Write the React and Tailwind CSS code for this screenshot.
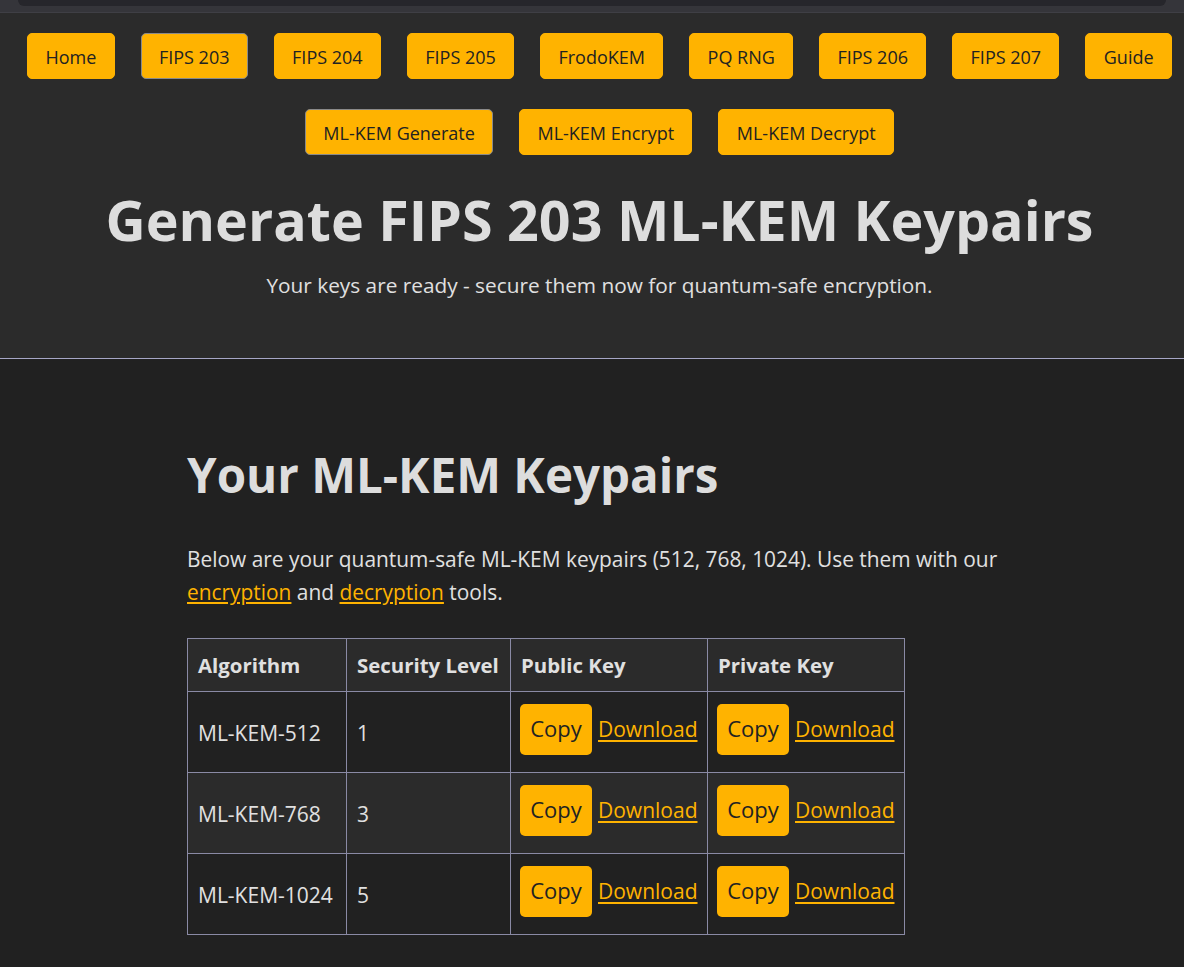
import React from 'react';

const NAV = ['Home', 'FIPS 203', 'FIPS 204', 'FIPS 205', 'FrodoKEM', 'PQ RNG', 'FIPS 206', 'FIPS 207', 'Guide'];
const SUB = ['ML-KEM Generate', 'ML-KEM Encrypt', 'ML-KEM Decrypt'];
const ACTIVE = ['FIPS 203', 'ML-KEM Generate'];

const ROWS = [
  { name: 'ML-KEM-512', level: 1 },
  { name: 'ML-KEM-768', level: 3 },
  { name: 'ML-KEM-1024', level: 5 },
];

const font = { fontFamily: '"Open Sans", "Noto Sans", sans-serif' };

const NavButton = ({ label }) => {
  const active = ACTIVE.includes(label);
  return (
    <button
      className={`h-[46px] pt-[2px] px-[17.3px] rounded-[5px] bg-[#ffb300] text-[#222] text-[18px] whitespace-nowrap border ${
        active ? 'border-[#8a8a8a]' : 'border-[#ffb300]'
      }`}
    >
      {label}
    </button>
  );
};

const KeyCell = () => (
  <td className="border border-[#8a8aa5] px-[9px] align-middle">
    <div className="flex items-center gap-[6px]">
      <button className="w-[72px] h-[51px] -mt-[6px] pb-[2px] rounded-[5px] bg-[#ffb300] text-[#222] text-[22px]">Copy</button>
      <a href="#" className="-mt-[4px] text-[#ffb300] underline text-[21px] underline-offset-[3px]">Download</a>
    </div>
  </td>
);

export default function App() {
  return (
    <div className="min-h-screen bg-[#212121] text-[#e0e0e0]" style={font}>
      {/* top strip */}
      <div className="h-[13px] bg-[#35353a] border-b border-[#3f3f45]">
        <div className="mx-[18px] h-[6px] bg-[#26262b] rounded-b-[8px]" />
      </div>

      {/* header */}
      <header className="bg-[#2b2b2b] border-b border-[#a6a6c6] pl-[15px] pt-[20px] pb-[57px]">
        <nav className="flex flex-col gap-y-[30px]">
          <div className="flex justify-center gap-x-[26px]">
            {NAV.map((l) => <NavButton key={l} label={l} />)}
          </div>
          <div className="flex justify-center gap-x-[26px]">
            {SUB.map((l) => <NavButton key={l} label={l} />)}
          </div>
        </nav>
        <h1 className="mt-[25px] text-center font-bold text-[55.6px] leading-[80px] text-[#dddddd]">
          Generate FIPS 203 ML-KEM Keypairs
        </h1>
        <p className="mt-[10px] text-center text-[20.8px] text-[#e0e0e0]">
          Your keys are ready - secure them now for quantum-safe encryption.
        </p>
      </header>

      {/* main */}
      <main className="pl-[15px] pt-[86px] pb-[34px]">
        <div className="w-[825px] mx-auto">
          <h2 className="font-bold text-[47.5px] leading-[60px] text-[#dddddd]">Your ML-KEM Keypairs</h2>
          <p className="mt-[38px] text-[20.9px] leading-[33px]">
            Below are your quantum-safe ML-KEM keypairs (512, 768, 1024). Use them with our{' '}
            <a href="#" className="text-[#ffb300] underline">encryption</a> and{' '}
            <a href="#" className="text-[#ffb300] underline">decryption</a> tools.
          </p>
          <table className="mt-[29px] w-[718px] table-fixed border-collapse border border-[#8a8aa5] whitespace-nowrap">
            <colgroup>
              <col className="w-[159px]" />
              <col className="w-[164px]" />
              <col className="w-[197px]" />
              <col className="w-[197px]" />
            </colgroup>
            <thead>
              <tr className="bg-[#2b2b2b] h-[53px] text-[20.4px]">
                <th className="border border-[#8a8aa5] px-[10px] text-left font-bold">Algorithm</th>
                <th className="border border-[#8a8aa5] px-[10px] text-left font-bold">Security Level</th>
                <th className="border border-[#8a8aa5] px-[10px] text-left font-bold">Public Key</th>
                <th className="border border-[#8a8aa5] px-[10px] text-left font-bold">Private Key</th>
              </tr>
            </thead>
            <tbody>
              {ROWS.map((r, i) => (
                <tr key={r.name} className={`h-[81px] text-[21px] ${i === 1 ? 'bg-[#2b2b2b]' : 'bg-[#212121]'}`}>
                  <td className="border border-[#8a8aa5] px-[10px] pt-[4px]">{r.name}</td>
                  <td className="border border-[#8a8aa5] px-[10px] pt-[4px]">{r.level}</td>
                  <KeyCell />
                  <KeyCell />
                </tr>
              ))}
            </tbody>
          </table>
        </div>
      </main>
    </div>
  );
}
